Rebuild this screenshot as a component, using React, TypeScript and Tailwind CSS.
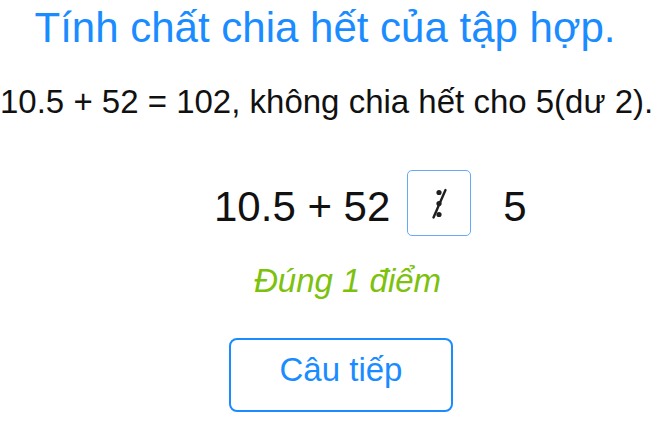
import React from 'react';

function NotDivisible() {
  return (
    <svg width="20" height="32" viewBox="0 0 20 32" className="block">
      <circle cx="9" cy="4.5" r="2.6" fill="#1f1f1f" />
      <circle cx="9" cy="15.5" r="2.6" fill="#1f1f1f" />
      <circle cx="9" cy="26.5" r="2.6" fill="#1f1f1f" />
      <line x1="15.5" y1="2" x2="3.5" y2="29.5" stroke="#1f1f1f" strokeWidth="2.4" strokeLinecap="round" />
    </svg>
  );
}

export default function App() {
  return (
    <div className="w-[666px] h-[434px] bg-white overflow-hidden font-['Liberation_Sans',Arial,sans-serif]">
      <div className="w-[650px] flex flex-col">
        <h1 className="mt-[4px] h-[48px] leading-[48px] text-[42px] text-center text-[#1a8cff] whitespace-nowrap">
          Tính chất chia hết của tập hợp.
        </h1>

        <p className="mt-[30px] h-[40px] leading-[40px] text-[33px] text-center text-[#111] whitespace-nowrap">
          10.5 + 52 = 102, không chia hết cho 5(dư 2).
        </p>

        <div className="mt-[48px] ml-[214px] h-[66px] flex items-start">
          <span className="mt-[16px] leading-[42px] text-[42px] text-[#111] whitespace-nowrap">10.5 + 52</span>
          <div className="ml-[17px] w-[64px] h-[66px] border border-[#66aaf5] rounded-[5px] flex items-center justify-center">
            <div className="ml-[1px] mt-[1px]">
              <NotDivisible />
            </div>
          </div>
          <span className="ml-[32px] mt-[16px] leading-[42px] text-[42px] text-[#111]">5</span>
        </div>

        <p className="mt-[25px] ml-[254px] h-[40px] leading-[40px] text-[33px] italic text-[#7cc10c] whitespace-nowrap">
          Đúng 1 điểm
        </p>

        <button className="mt-[37px] ml-[229px] w-[224px] h-[74px] border-2 border-[#1a8cff] rounded-[8px] bg-white flex justify-center pt-[10px]">
          <span className="leading-[40px] text-[33px] text-[#1a8cff]">Câu tiếp</span>
        </button>
      </div>
    </div>
  );
}
